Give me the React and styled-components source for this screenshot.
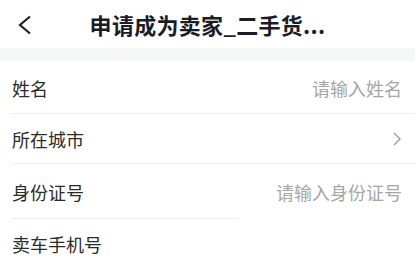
import React from 'react'
import styled, { createGlobalStyle } from 'styled-components'

const Global = createGlobalStyle`
  body {
    margin: 0;
    background: #fff;
    font-family: "Noto Sans CJK SC", "Noto Sans", sans-serif;
  }
`

const Page = styled.div`
  width: 415px;
  height: 270px;
  overflow: hidden;
  background: #fff;
`

const Header = styled.div`
  position: relative;
  height: 48px;
  display: flex;
  align-items: center;
  justify-content: center;
`

const Back = styled.button`
  position: absolute;
  left: 14px;
  top: 14px;
  width: 20px;
  height: 22px;
  padding: 0;
  border: 0;
  background: none;
  display: flex;
  align-items: center;
  justify-content: center;
`

const Title = styled.h1`
  margin: 0;
  font-size: 22px;
  font-weight: 700;
  color: #1a1d26;
  letter-spacing: 0.3px;
`

const Band = styled.div`
  height: 13px;
  background: #f5f6f8;
`

const Row = styled.div`
  height: ${p => p.$h || 52}px;
  box-sizing: border-box;
  margin-left: 12px;
  padding-right: 13px;
  display: flex;
  align-items: center;
  justify-content: space-between;
  position: relative;
  &::after {
    content: '';
    display: ${p => (p.$last ? 'none' : 'block')};
    position: absolute;
    left: 0;
    bottom: 0;
    width: ${p => p.$lineWidth || '100%'};
    height: 1px;
    background: #efefef;
  }
`

const Label = styled.span`
  font-size: 18px;
  color: #2b2b2b;
`

const Placeholder = styled.span`
  font-size: 18px;
  color: #a6a6a6;
`

const Chevron = () => (
  <svg width="10" height="16" viewBox="0 0 10 16">
    <path d="M2 2 L8 8 L2 14" fill="none" stroke="#9a9a9a" strokeWidth="1.4" />
  </svg>
)

export default function App() {
  return (
    <Page>
      <Global />
      <Header>
        <Back aria-label="返回">
          <svg width="16" height="20" viewBox="0 0 16 20">
            <path d="M14 1.5 L4 10 L14 18.5" fill="none" stroke="#222" strokeWidth="2.2" />
          </svg>
        </Back>
        <Title>申请成为卖家_二手货...</Title>
      </Header>
      <Band />
      <Row $h={53}>
        <Label>姓名</Label>
        <Placeholder>请输入姓名</Placeholder>
      </Row>
      <Row $h={50}>
        <Label>所在城市</Label>
        <Chevron />
      </Row>
      <Row $h={55} $lineWidth="225px">
        <Label>身份证号</Label>
        <Placeholder>请输入身份证号</Placeholder>
      </Row>
      <Row $h={50} $last>
        <Label>卖车手机号</Label>
      </Row>
    </Page>
  )
}
